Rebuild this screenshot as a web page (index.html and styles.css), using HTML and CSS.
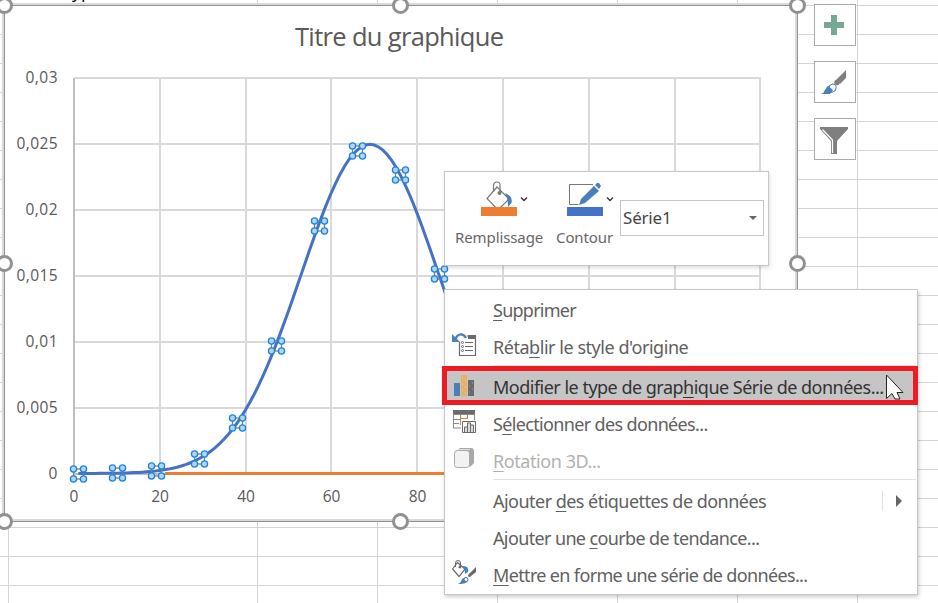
FILE: index.html
```html
<!DOCTYPE html>
<html lang="fr">
<head>
<meta charset="utf-8">
<title>Graphique</title>
<link rel="stylesheet" href="styles.css">
</head>
<body>
<main class="sheet">
  <div class="cell-text">yp</div>

  <svg class="chart" width="806" height="530" viewBox="0 0 806 530">
    <rect x="2" y="3" width="796" height="519" fill="#d9d9d9"/>
    <rect x="4" y="5" width="794" height="517" fill="#919191"/>
    <rect x="5" y="6" width="790" height="513" fill="#fff"/>
    <path d="M795 6h2v515H5v-2h790z" fill="#d9d9d9"/>
    <path class="grid" d="M74 78H761M74 144H760M74 210H760M74 276H760M74 342H760M74 408H760M160 78V474M246 78V474M331 78V474M417 78V474M503 78V474M589 78V474M675 78V474M760 78V474"/>
    <path class="axis" d="M74 78V474H760"/>
    <path d="M165 473.5H760" stroke="#ed7d31" stroke-width="3"/>
    <path id="curve" fill="none" stroke="#4472c4" stroke-width="3"/>
    <g id="markers"></g>
    <text class="title" x="295" y="46" textLength="209">Titre du graphique</text>
    <g class="labels">
      <text x="25.5" y="83" textLength="32">0,03</text>
      <text x="16.5" y="149" textLength="41">0,025</text>
      <text x="25.5" y="215" textLength="32">0,02</text>
      <text x="16.5" y="281" textLength="41">0,015</text>
      <text x="25.5" y="347" textLength="32">0,01</text>
      <text x="16.5" y="413" textLength="41">0,005</text>
      <text x="48.5" y="479">0</text>
      <g text-anchor="middle">
        <text x="74" y="502">0</text>
        <text x="160" y="502">20</text>
        <text x="246" y="502">40</text>
        <text x="331.500" y="502">60</text>
        <text x="417.500" y="502">80</text>
      </g>
    </g>
    <g fill="#fff" stroke="#919191" stroke-width="3">
      <circle cx="4.500" cy="5.500" r="7"/><circle cx="400.500" cy="5.500" r="7"/><circle cx="797.500" cy="5.500" r="7"/>
      <circle cx="4.500" cy="263.500" r="7"/><circle cx="797.500" cy="263.500" r="7"/>
      <circle cx="4.500" cy="521.500" r="7"/><circle cx="400.500" cy="521.500" r="7"/>
    </g>
  </svg>

  <aside class="side">
    <button class="side-btn"><svg width="40" height="40"><path d="M16 10h6v7h7v6h-7v7h-6v-7H9v-6h7z" fill="#77a896"/></svg></button>
    <button class="side-btn"><svg width="40" height="40">
      <path d="M31 8v8l-6 6-4-4z" fill="#7f7f7f"/><circle cx="22" cy="20.500" r="2.700" fill="#7f7f7f"/>
      <path d="M6 32c4-1 4-4 6-7l5-3c4 0 5 4 2 7-3 3-7 3-13 3z" fill="#4a80b8"/>
      <ellipse cx="17.500" cy="26" rx="3.500" ry="4" fill="#fff" stroke="#4472c4" transform="rotate(25 17.500 26)"/>
      <path d="M10 28l3-4 5 4-3 4H8z" fill="#4a80b8"/></svg></button>
    <button class="side-btn"><svg width="40" height="40"><path d="M5 8h28v2L22 22v13h-6V22L5 10z" fill="#7f7f7f"/><path d="M7.500 10.500l10 10.500v13" fill="none" stroke="#fff" stroke-width="1.200"/></svg></button>
  </aside>

  <section class="toolbar">
    <div class="tool fill">
      <svg width="48" height="40">
        <path d="M17 7l12 12-11 11L7 18.500z" fill="#fff" stroke="#777" stroke-width="1.200"/>
        <path d="M13.500 12V6q0-4 3.500-4t3 4v6" fill="none" stroke="#777" stroke-width="1.200"/>
        <circle cx="19.500" cy="13" r="2" fill="#777"/>
        <path d="M25 13q8 3 6.500 10l-3.500 4q0-9-3-14z" fill="#4a80b8"/>
        <path d="M1 27h36v9H1z" fill="#ed7d31"/>
        <path d="M41 17.500l3 3 3-3" fill="none" stroke="#333" stroke-width="1.400"/>
      </svg>
      <span class="tool-label l1">Remplissage</span>
    </div>
    <div class="tool outline">
      <svg width="48" height="40">
        <path d="M27 4.500H3.500v20h9" fill="none" stroke="#777"/>
        <path d="M13 25l2-6L28 6l5 5-14 12z" fill="#4a80b8"/><path d="M29 5l2-2h2l2 3-2 3z" fill="#4a80b8"/>
        <path d="M1 27h36v9H1z" fill="#4472c4"/>
        <path d="M41 17.500l3 3 3-3" fill="none" stroke="#333" stroke-width="1.400"/>
      </svg>
      <span class="tool-label l2">Contour</span>
    </div>
    <div class="select"><span>Série1</span><i class="caret"></i></div>
  </section>

  <nav class="menu">
    <div class="item"><span class="t1"><u>S</u>upprimer</span></div>
    <div class="item">
      <svg class="icon" width="26" height="26">
        <path d="M7.500 10v13.500h16V4H15" fill="none" stroke="#6a6a6a" stroke-width="1.200"/><path d="M16 3h8v4h-8z" fill="#6a6a6a"/>
        <g fill="none" stroke="#6a6a6a"><circle cx="10.500" cy="10.500" r="1"/><circle cx="10.500" cy="14.500" r="1"/><circle cx="10.500" cy="18.500" r="1"/><path d="M13 10.500h8M13 14.500h8M13 18.500h8"/></g>
        <path d="M14 6C11 1 6 1 3.500 7" fill="none" stroke="#4a80b8" stroke-width="2.400"/><path d="M0 2v8h8z" fill="#4a80b8"/>
      </svg><span class="t2">Réta<u>b</u>lir le style d'origine</span></div>
    <hr>
    <div class="item active">
      <svg class="icon" width="26" height="26">
        <path d="M2 11h6v13H2z" fill="#4a80b8"/><path d="M9 3h6v21H9z" fill="#e8b067"/><path d="M16 8h6v16h-6z" fill="#6a6a6a"/>
        <path d="M10 6h1M13 9h1M10 12h1M13 15h1M10 18h1M13 21h1" stroke="#f6d9ae"/><path d="M20 11h1M17 14h1M20 17h1M17 20h1" stroke="#999"/>
      </svg><span class="t3">Modifier le type de grap<u>h</u>ique Série de données...</span></div>
    <div class="item">
      <svg class="icon" width="26" height="26">
        <path d="M1.500 2v17H9M22.500 2v9M1 10.500h8M1 14.500h6M8.500 5v6M15.500 5v5M1 5.500h22" fill="none" stroke="#888"/>
        <path d="M1 1h22v4H1z" fill="#6a6a6a"/><path d="M8.500 16V9.500H16" fill="none" stroke="#ed7d31"/>
        <path d="M10.500 12.500h13v11h-13z" fill="#fff" stroke="#6a6a6a"/>
        <path d="M12.500 23v-5h3v5M18.500 23v-7h3v7M15.500 23v-9h3v9" fill="#ddd" stroke="#6a6a6a"/>
      </svg><span class="t4">S<u>é</u>lectionner des données...</span></div>
    <div class="item disabled">
      <svg class="icon" width="26" height="26">
        <path d="M4 5l4-3h11q3 0 3 3v12l-4 4z" fill="#a8a8a8"/>
        <rect x="2.500" y="4.500" width="15" height="17" rx="3" fill="#f2f2f2" stroke="#aaa"/><path d="M6 3.500h12" stroke="#ddd"/>
      </svg><span class="t5"><u>R</u>otation 3D...</span></div>
    <hr>
    <div class="item"><span class="t6">Ajouter <u>d</u>es étiquettes de données</span><i class="arrow"></i></div>
    <div class="item"><span class="t7">Ajouter une <u>c</u>ourbe de tendance...</span></div>
    <div class="item">
      <svg class="icon" width="26" height="26">
        <path d="M5.500 2.500L13 9l-6 7.500L.500 9z" fill="#fff" stroke="#666" stroke-width="1.200"/>
        <path d="M3.500 7V3q0-2.500 2.500-2.500T8.500 3v5" fill="none" stroke="#666"/><circle cx="8" cy="7" r="1.400" fill="#666"/>
        <path d="M10 6q7-1 6 6l-3 2q0-5-3-8z" fill="#4a80b8"/>
        <path d="M24 7v5l-5 4-2-2z" fill="#6a6a6a"/><circle cx="17.500" cy="15.500" r="1.500" fill="#6a6a6a"/>
        <path d="M6 24q3-1 4-5l4-2q4 2 1 5-2 2-9 2z" fill="#4a80b8"/><circle cx="14" cy="19.500" r="2" fill="#fff" stroke="#4472c4"/>
      </svg><span class="t8"><u>M</u>ettre en forme une série de données...</span></div>
  </nav>
  <svg class="cursor" width="20" height="26"><path d="M1.500 1v23.500l5.500-5L10 25h5l-3-6.500h6z" fill="#fff" stroke="#222"/></svg>
  <div class="frame"></div>
</main>
<script src="chart.js"></script>
</body>
</html>
```

FILE: styles.css
```css
* { box-sizing: border-box; }
body { margin: 0; background: #fff; font-family: "Noto Sans", "Open Sans", sans-serif; }
.sheet {
  position: relative; width: 938px; height: 603px; overflow: hidden;
  background:
    linear-gradient(#d4d4d4, #d4d4d4) 8px 0 / 1px 100% no-repeat,
    repeating-linear-gradient(90deg, transparent 0 17px, #d4d4d4 17px 18px, transparent 18px 120px) 240px 0 / 698px 100% no-repeat,
    repeating-linear-gradient(transparent 0 5px, #d4d4d4 5px 6px, transparent 6px 29px);
}
.cell-text { position: absolute; left: 72px; top: -19px; font: 18px/20px "Open Sans", sans-serif; color: #000; }
.chart { position: absolute; left: 0; top: 0; overflow: visible; }
.grid { fill: none; stroke: #d9d9d9; stroke-width: 2; }
.axis { fill: none; stroke: #bfbfbf; stroke-width: 2; }
.title { font: 25.500px "Open Sans", sans-serif; fill: #595959; }
.labels { font: 15.500px "Open Sans", sans-serif; fill: #595959; }

.side { position: absolute; left: 814px; top: 4px; display: flex; flex-direction: column; gap: 15px; }
.side-btn { width: 42px; height: 42px; padding: 0; border: 1px solid #ababab; background: #fff; }
.side-btn svg { display: block; }

.toolbar {
  position: absolute; left: 444px; top: 171px; width: 325px; height: 95px;
  display: flex; border: 1px solid #c6c6c6; background: #fff; box-shadow: 1px 2px 4px rgba(0,0,0,.13);
}
.tool { display: flex; flex-direction: column; padding-top: 8px; color: #666; font-size: 15px; line-height: 20px; }
.tool svg { display: block; }
.tool-label { margin-top: 7px; letter-spacing: -.1px; white-space: nowrap; }
.fill { width: 100px; padding-left: 10px; }
.fill svg { margin-left: 25px; }
.outline { width: 75px; padding-left: 11px; }
.outline svg { margin-left: 10px; }
.select {
  display: flex; align-items: center; justify-content: space-between; width: 144px; height: 36px;
  margin-top: 28px; padding: 0 6px 2px 2px; border: 1px solid #c6c6c6; color: #444; font-size: 17px; letter-spacing: -.2px;
}
.caret { margin-top: 2px; border: 4px solid transparent; border-top-color: #666; border-bottom: 0; }

.menu {
  position: absolute; left: 444px; top: 289px; width: 474px; height: 306px; padding: 1px 0;
  border: 1px solid #c6c6c6; background: #fff; color: #606060; font-size: 18px;
  box-shadow: 1px 2px 4px rgba(0,0,0,.2);
}
.item { position: relative; display: flex; align-items: center; height: 37px; padding-left: 48px; white-space: nowrap; }
.item u { text-decoration-thickness: 1px; text-underline-offset: 3px; }
.icon { position: absolute; left: 7px; top: 4px; }
.menu hr { height: 1px; margin: 0 1px 2px 48px; border: 0; background: #e1e1e1; }
.t1 { letter-spacing: -.75px; }
.t2 { letter-spacing: -.46px; }
.t3 { letter-spacing: -.51px; }
.t4 { letter-spacing: -.65px; }
.t5 { letter-spacing: -.43px; }
.t6 { letter-spacing: -.53px; }
.t7 { letter-spacing: -.63px; }
.t8 { letter-spacing: -.65px; }
.active { background: #c5c5c5; color: #333; }
.disabled { color: #b1b1b1; }
.arrow { margin-left: auto; width: 35px; height: 20px; border-left: 1px solid #e1e1e1; display: flex; align-items: center; padding-left: 13px; }
.arrow::before { content: ""; border: 6px solid transparent; border-left-color: #666; border-right: 0; }
.frame { position: absolute; left: 442px; top: 366px; width: 476px; height: 39px; border: 5px solid #ed1c24; }
.cursor { position: absolute; left: 885px; top: 374px; }
```

FILE: chart.js
```js
const NS = "http://www.w3.org/2000/svg";
const mean = 69, sigma = 16;
const density = x => Math.exp(-((x - mean) ** 2) / (2 * sigma * sigma)) / (sigma * Math.sqrt(2 * Math.PI));
let d = "";
for (let x = 1; x <= 100; x++) {
  d += (d ? "L" : "M") + (74 + x * 4.29).toFixed(2) + " " + (473.5 - density(x) * 13200).toFixed(2);
}
document.getElementById("curve").setAttribute("d", d);

const points = [[78.5, 474], [117.5, 473], [156.5, 471], [199.5, 459], [237.5, 423], [276.5, 346], [319.5, 226], [357.5, 151], [400.5, 175], [439.5, 274]];
const group = document.getElementById("markers");
function add(name, attrs) {
  const el = document.createElementNS(NS, name);
  for (const key in attrs) el.setAttribute(key, attrs[key]);
  group.appendChild(el);
}
for (const [x, y] of points) {
  add("rect", { x: x - 5, y: y - 5, width: 10, height: 10, fill: "none", stroke: "#7f7f7f", "stroke-width": 1.3 });
  for (const dx of [-5, 5]) for (const dy of [-5, 5]) {
    add("circle", { cx: x + dx, cy: y + dy, r: 3.1, fill: "#b4d5f0", stroke: "#1c86dc", "stroke-width": 1.3 });
  }
}
```
